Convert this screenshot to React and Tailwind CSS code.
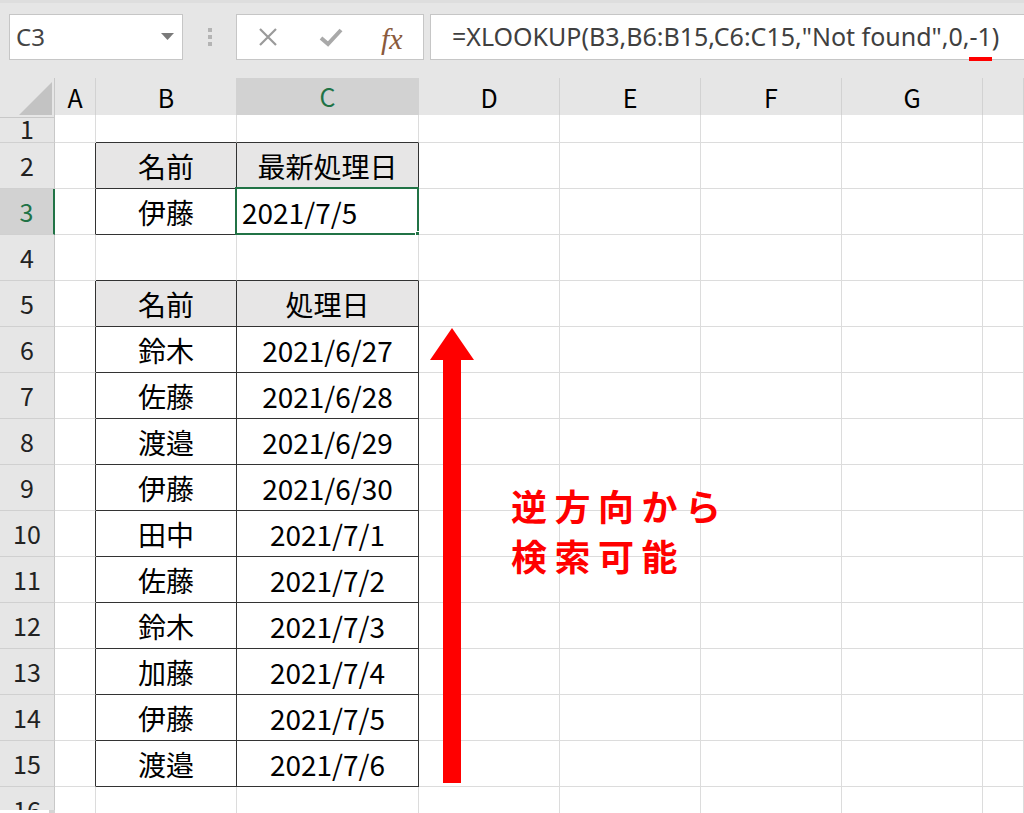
import React from "react";

const GRID = "grid grid-cols-[55px_41px_141px_182px_141px_141px_141px_141px_41px]";
const FONT = { fontFamily: '"Noto Sans CJK JP", "Noto Sans", sans-serif' };

const letters = ["A", "B", "C", "D", "E", "F", "G", ""];

// row number -> [B, C, isHeader]
const cells = {
  2: ["名前", "最新処理日", true],
  3: ["伊藤", "2021/7/5", false],
  5: ["名前", "処理日", true],
  6: ["鈴木", "2021/6/27"],
  7: ["佐藤", "2021/6/28"],
  8: ["渡邉", "2021/6/29"],
  9: ["伊藤", "2021/6/30"],
  10: ["田中", "2021/7/1"],
  11: ["佐藤", "2021/7/2"],
  12: ["鈴木", "2021/7/3"],
  13: ["加藤", "2021/7/4"],
  14: ["伊藤", "2021/7/5"],
  15: ["渡邉", "2021/7/6"],
};

const rows = Array.from({ length: 16 }, (_, i) => i + 1);

const boxed = (r, c) => (c === 2 || c === 3) && cells[r] !== undefined;

function Cell({ r, c }) {
  const rightDark = boxed(r, c) || boxed(r, c + 1);
  const bottomDark = boxed(r, c) || boxed(r + 1, c);
  const data = cells[r];
  const isHead = data && data[2];
  const text = data && (c === 2 ? data[0] : c === 3 ? data[1] : null);
  const selected = r === 3 && c === 3;

  return (
    <div
      className={`relative flex items-center border-r border-b text-[28px] text-black ${
        rightDark ? "border-r-[#333]" : "border-r-[#dcdcdc]"
      } ${bottomDark ? "border-b-[#333]" : "border-b-[#dcdcdc]"} ${
        isHead && boxed(r, c) ? "bg-[#e7e6e6]" : "bg-white"
      } ${selected ? "justify-start pl-[5px]" : "justify-center"}`}
    >
      {text}
      {selected && (
        <>
          <div className="absolute -left-[2px] -top-[2px] -right-px -bottom-px border-2 border-[#217346]" />
          <div className="absolute -right-[4px] -bottom-[4px] w-[7px] h-[7px] bg-[#217346] border border-white" />
        </>
      )}
    </div>
  );
}

function Toolbar() {
  return (
    <div className="flex items-start h-[78px] pt-[11px] pl-[9px] bg-[#e6e6e6] border-t-[3px] border-t-[#dedede]">
      <div
        className="relative shrink-0 w-[174px] h-[46px] bg-white border border-[#c6c6c6] flex items-center pl-[6px] text-[24px] text-[#444]"
        style={{ fontFamily: '"Noto Sans", sans-serif' }}
      >
        C3
        <svg className="absolute right-[8px] top-[18px]" width="13" height="7" viewBox="0 0 13 7">
          <path d="M0 0 L13 0 L6.5 7 Z" fill="#7a7a7a" />
        </svg>
      </div>
      <div className="shrink-0 w-[53px] h-[46px] flex flex-col items-center justify-center gap-[3px]">
        <div className="w-[4px] h-[4px] bg-[#b4b4b4]" />
        <div className="w-[4px] h-[4px] bg-[#b4b4b4]" />
        <div className="w-[4px] h-[4px] bg-[#b4b4b4]" />
      </div>
      <div className="relative shrink-0 w-[188px] h-[46px] bg-white border border-[#c6c6c6]">
        <svg className="absolute left-[21px] top-[12px]" width="20" height="20" viewBox="0 0 20 20">
          <path d="M2 2 L18 18 M18 2 L2 18" stroke="#9a9a9a" strokeWidth="2.2" />
        </svg>
        <svg className="absolute left-[82px] top-[12px]" width="24" height="20" viewBox="0 0 24 20">
          <path d="M2 11 L9 17 L22 3" stroke="#a9a9a9" strokeWidth="4" fill="none" />
        </svg>
        <span
          className="absolute left-[144px] top-[1px] text-[30px] italic text-[#8a5a3c]"
          style={{ fontFamily: '"Liberation Serif", serif' }}
        >
          fx
        </span>
      </div>
      <div
        className="relative shrink-0 h-[46px] ml-[6px] w-[620px] bg-white border border-[#c6c6c6] flex items-center pl-[21px] text-[25px] text-[#404040]"
        style={{ fontFamily: '"Noto Sans", sans-serif' }}
      >
        =XLOOKUP(B3,B6:B15,C6:C15,"Not found",0,
        <span className="relative">
          -1
          <span className="absolute left-0 right-0 -bottom-[5px] h-[4px] bg-[#ff0000]" />
        </span>
        )
      </div>
    </div>
  );
}

function ColumnHeader() {
  return (
    <div className={`${GRID} h-[37px] bg-[#e6e6e6]`}>
      <div className="relative border-r border-b border-[#c8c8c8]">
        <svg className="absolute right-[2px] bottom-[2px]" width="33" height="33" viewBox="0 0 33 33">
          <path d="M33 0 L33 33 L0 33 Z" fill="#c3c3c3" />
        </svg>
      </div>
      {letters.map((l, i) => (
        <div
          key={i}
          className={`flex items-center justify-center text-[25px] border-r border-r-[#d2d2d2] ${
            l === "C"
              ? "bg-[#d2d2d2] text-[#217346] border-b-2 border-b-[#217346]"
              : "text-black border-b border-b-[#c8c8c8]"
          }`}
        >
          {l}
        </div>
      ))}
    </div>
  );
}

export default function App() {
  return (
    <div className="relative w-[1024px] h-[813px] overflow-hidden bg-white" style={FONT}>
      <Toolbar />
      <ColumnHeader />
      {rows.map((r) => (
        <div
          key={r}
          className={`${GRID} ${r === 1 ? "h-[28px]" : r === 16 ? "h-[23px]" : "h-[46px]"}`}
        >
          <div
            className={`flex justify-center text-[25px] border-b border-b-[#d0d0d0] ${
              r === 3
                ? "bg-[#d2d2d2] text-[#217346] border-r-2 border-r-[#217346]"
                : "bg-[#e6e6e6] text-[#222] border-r border-r-[#c8c8c8]"
            } ${r === 1 ? "items-start leading-[26px]" : r === 16 ? "items-start leading-[44px]" : "items-center"}`}
          >
            {r}
          </div>
          {[1, 2, 3, 4, 5, 6, 7, 8].map((c) => (
            <Cell key={c} r={r} c={c} />
          ))}
        </div>
      ))}
      <div className="flex h-[3px]">
        <div className="w-[49px] bg-white" />
        <div className="w-[181px] bg-[#d4d4d4]" />
        <div className="w-[85px] bg-white" />
        <div className="flex-1 bg-[#d4d4d4]" />
      </div>

      {/* red arrow */}
      <svg className="absolute left-[430px] top-[328px]" width="44" height="455" viewBox="0 0 44 455">
        <path d="M22 0 L44 32 L0 32 Z" fill="#ff0000" />
        <rect x="13" y="31" width="18" height="424" fill="#ff0000" />
      </svg>

      <div className="absolute left-[511px] top-[480px] text-[36px] font-bold leading-[50px] tracking-[7.5px] text-[#ff0000]">
        <div>逆方向から</div>
        <div>検索可能</div>
      </div>
    </div>
  );
}
